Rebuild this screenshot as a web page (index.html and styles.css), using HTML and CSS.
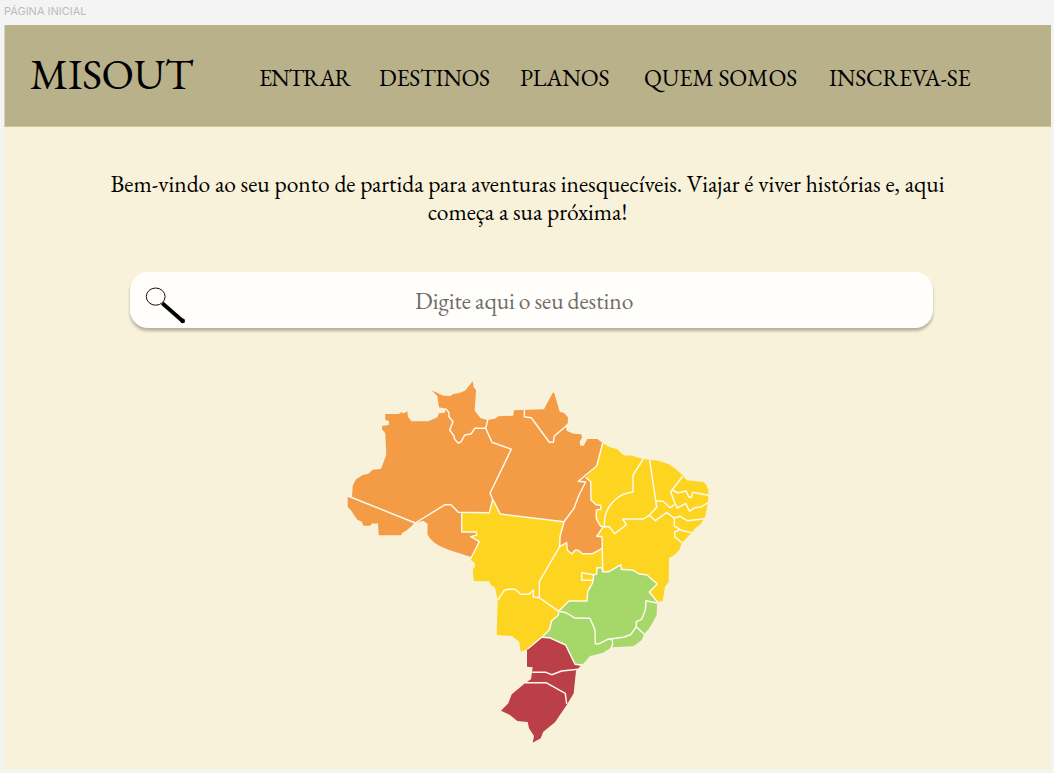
FILE: index.html
```html
<!DOCTYPE html>
<html lang="pt-BR">
<head>
<meta charset="utf-8">
<title>Misout</title>
<link rel="stylesheet" href="styles.css">
</head>
<body>
<div class="frame-label">PÁGINA INICIAL</div>
<div class="frame">
  <header class="header">
    <div class="brand">MISOUT</div>
    <nav class="nav">
      <a class="entrar">ENTRAR</a>
      <a class="destinos">DESTINOS</a>
      <a class="planos">PLANOS</a>
      <a class="quem">QUEM SOMOS</a>
      <a class="inscreva">INSCREVA-SE</a>
    </nav>
  </header>
  <main class="main">
    <p class="welcome">Bem-vindo ao seu ponto de partida para aventuras inesquecíveis. Viajar é viver histórias e, aqui<br>começa a sua próxima!</p>
    <div class="search">
      <svg class="search-icon" width="44" height="40" viewBox="144 285 44 40">
        <ellipse cx="155.7" cy="296.6" rx="9.4" ry="8.6" fill="none" stroke="#111" stroke-width="1"/>
        <path d="M162.4 303.2L182.6 321" stroke="#000" stroke-width="3.8"/>
        <circle cx="182.7" cy="320.9" r="2.3"/>
      </svg>
      <span class="placeholder">Digite aqui o seu destino</span>
    </div>
    <svg class="map" width="380" height="375" viewBox="340 375 380 375">
      <path class="norte" d="M347.7 496.3L352 497L352.7 485.7L356 479.3L363.3 474.7L368 474L372.7 469.7L381 469L386.3 454.7L385.3 433.3L382 429.3V426L388.7 425L389 421L385.3 420V414H398.7L401.7 412L403 413.5L407.3 411.3L408 416.7L411.3 421.3H428.3L437.3 417.3L439 413.3L445 412.7L445.3 408.5L439 407.3L437.3 396L431.7 390.3L443.3 395.7L450.3 396L453.3 394L459 393L465 390.7L472.7 381.3L473.7 387.3L476 390L474.7 410.7L480.7 418.3L487.3 420L495 418.7L498.3 416.3L513.3 415.7L514 410.3L544 409.3L553 392.3L554.3 393.3L559.7 411.7L564 413L568 417.3L567.7 423.3L565.7 425.7L566.7 430.7L573.3 433.7L581.3 434.3L582 437.7L579.7 441.7L580.3 445.7H583.7L587.3 439H597.3L602.7 443L603 560H560L471 557L450 550.3Q438 546 433.3 541.7Q428 537 427.3 533.3L427.7 524L423.3 520.7L414 523.3L411.7 526L405.7 531L402 533L401.3 535.3H378.7L378 523.5H372L370 525.7H363.3L362 521.7L357.3 519.7L350.7 510L347.7 507Z"/>
      <path class="amarelo" d="M602.7 443L610 447.3L617.3 449.3L624.3 455.7L630 455.3L643.3 459L658.3 460.7L668.3 464Q677 469 682.7 475.3L686.7 480.3L703.3 482L706 484.3L708.3 490L708 503.3L705 516.7L700.7 524.3L696.7 526.7L691.7 532.7L682 542.7L679.3 550L674.3 555L669 558L668.7 581.7L665 586.7L662.7 601L657.3 601.7L640 610L559 611.3L558.3 615.3L551.7 620.7L549.3 630L541.7 637.3L527.3 649.3L520.7 651.7L519.3 641.7L511.7 636L496.7 635L497.7 600L495 587.7L491 585L489 581.3L473.7 581L472.7 569.3L475 566.7L474.7 562.7L470.7 560L479.3 541.7L470.7 536.7L476.7 535L476.3 532H461.7V513H489.3L492.7 499.3L500.3 514L564 521.7L560 536.7L559.7 546.7L566.7 542.7L567.3 550L571.7 554L575 550.3H578.3L582.3 553.7H592.7L602.3 548.3L602 536.7L596.7 536.3L603.3 526.7L600.7 526.3L596.3 518.7V510L600.7 509.3V505.3L596 504.7L591 500L590.7 481.7L585.7 477.3L596.7 466Z"/>
      <path class="verde" d="M657.3 601.7L649.3 592L657.3 584L646.7 574.7L639.3 574L633.3 570.3L621.3 569.3L621 564.7L609 571.7H602.7L602 567.7H597L596.7 574L593.7 574.7L592.7 582.7L587.7 591.7L587 601H569L558.7 611.3L558.3 615.3L551.7 620.7L549.3 630L541.7 637.3L565.7 645L575 664.3L583.3 663.7L590 656L603.3 652.7L611.7 647.3L633.3 646.3L641.7 640L644 634.3L649.3 628.3L656.7 615L657 603Z"/>
      <path class="sul" d="M527 649.3L541.7 637.3L549.3 637.7L565.7 645L575 664L580.7 665.7L576 670.7L573.7 693.3L566.7 705L555 722.3L543.3 731.7L540.7 738.3L532.7 742.7L534 736L529 728.3L527.7 722L517.3 721L510 715L501 710.7L508.3 703.3L511.7 694.3L525 683.3L531 679.3L532.7 667.3L527 666.7Z"/>
      <g class="limites">
        <path d="M348 496L415.3 523L445 504.7H451L458.3 512.3L489.3 512.7L492.7 499.3L500.3 514L564 521.7L560 536.7L559.7 546.7L539.3 581.7V597.7L533.3 597V590L529 594.3H521L515 589.3L509.3 589L504.3 590.3L497.7 600"/>
        <path d="M487.7 420L485.7 428.3L492 442.3L511.3 449.3L490 493.3L492.7 499.3M445.3 408.5L448.7 412.3L449 416.7L453 421.7L449.7 430L454 436L454.7 439.3L458 443L461 442L464.7 435L471 434L474.7 428.3H485.7"/>
        <path d="M524.5 410L524.3 416.7L531.3 417.7L549.3 442.3H553.3L554.3 436L567.3 425M602.7 443L596.7 466L578.3 481.3L585.7 482L579 495L574 508.3L564 521.7"/>
        <path d="M461.7 513V532H476.3L476.7 535L470.7 536.7L479.3 541.7L471 558M559.7 546.7L566.7 542.7L567.3 550L571.7 554L575 550.3H578.3L582.3 553.7H592.7L602.3 548.3L602 536.7L596.7 536.3L603.3 526.7L600.7 526.3L596.3 518.7V510L600.7 509.3V505.3L596 504.7L591 500L590.7 481.7L585.7 477.3"/>
        <path d="M643.3 459L633 475V492C618 493 603 507 604.5 526M649.7 460L656.7 507.3L649.3 515.3L643.3 519H622.7L626.3 524.7L614.7 533.7L609.3 526.7H603.3M656 501H662.7L670.3 507.7L674.3 504.7"/>
        <path d="M682.7 476.3L670.7 491.7L674.3 501.7L677.3 508L685.7 503.3L689.3 511L695 507.7L701.7 506.7L708 502.7M672.5 490L678 493L686 491L689 497.3H691.3L692.7 492.3L708 495.3"/>
        <path d="M649.3 515.3L655.3 520.7L666.7 512.7L674.3 518L680 516.3L687.3 520.7L705 518.7M674.3 518V526L680 529.3L674.7 532V536.7L682 542.7M680 530L691.7 532.7"/>
        <path d="M602.3 548.3L602.7 571.7M593.3 574.7L581.7 572.7V580.3H592.5M539.3 597.7L558.7 611.3"/>
        <path d="M657.3 601.7L649.3 592L657.3 584L646.7 574.7L639.3 574L633.3 570.3L621.3 569.3L621 564.7L609 571.7H602.7L602 567.7H597L596.7 574L593.7 574.7L592.7 582.7L587.7 591.7L587 601H569L558.7 611.3L558.3 615.3L551.7 620.7L549.3 630L541.7 637.3L527.3 649.3"/>
        <path d="M559.3 611.3L566 612.7L574.7 618L590 618.3L595 630L595.3 643.7H599.3L607.7 639.3L623.3 637.3L630.7 634.7L636.3 626.7V621.7L641.7 619.3L645.3 610L646 600.7L657 603M636.3 626.7L644.3 634.3M612 639L612.7 644L611 648.5"/>
        <path d="M541.7 637.3L549.3 637.7L565.7 645L575 664.3L580.7 665M532.3 672.3H546L551.7 674.7L561.7 671L578 669.3M525 682.7H546L565.3 693.3L566.7 704"/>
      </g>
    </svg>
  </main>
</div>
</body>
</html>
```
FILE: styles.css
```css
* { box-sizing: border-box; }
body {
  margin: 0;
  height: 773px;
  overflow: hidden;
  background: #f4f4f4;
  color: #000;
  font-family: "EB Garamond", "Liberation Serif", serif;
}
.frame-label {
  height: 25px;
  padding-left: 4px;
  font: 11px/23px Inter, sans-serif;
  color: #bbb;
}
.frame {
  width: 1047px;
  height: 745px;
  margin-left: 4px;
  background: #f9f2da;
}
.header {
  display: flex;
  align-items: flex-start;
  height: 102px;
  padding: 24px 0 0 25px;
  background: #b9b18a;
  border-left: 1px solid #d7d3be;
  border-bottom: 1px solid #cbc39f;
}
.brand {
  width: 229px;
  font-size: 42.5px;
  line-height: 50px;
  letter-spacing: -0.3px;
}
.nav {
  display: flex;
  padding-top: 14px;
  font-size: 23.5px;
  line-height: 30px;
  white-space: nowrap;
}
.entrar { width: 120px; letter-spacing: -1.2px; }
.destinos { width: 141px; letter-spacing: -0.3px; }
.planos { width: 124px; letter-spacing: -0.2px; }
.quem { width: 185px; }
.inscreva { letter-spacing: -0.2px; }
.main {
  display: flex;
  flex-direction: column;
  align-items: center;
}
.welcome {
  margin: 43px 0 0;
  font-size: 23.5px;
  line-height: 28px;
  text-align: center;
  white-space: nowrap;
}
.search {
  display: flex;
  align-items: center;
  width: 803px;
  height: 56px;
  margin: 46px 0 0 8px;
  padding-left: 14px;
  border-radius: 18px;
  background: #fffefa;
  box-shadow: 0 3px 3px rgba(0, 0, 0, 0.27);
}
.search-icon { margin-top: 10px; }
.placeholder {
  width: 218px;
  margin-left: 227px;
  font-size: 23.5px;
  word-spacing: -0.7px;
  color: #6d6d6a;
  white-space: nowrap;
}
.map {
  display: block;
  margin: 47px 0 0 5px;
}
.norte { fill: #f39b45; }
.amarelo { fill: #fdd420; }
.verde { fill: #a6d769; }
.sul { fill: #bb3f46; }
.limites {
  fill: none;
  stroke: #fffaf0;
  stroke-width: 1.45;
  stroke-linejoin: round;
}
```
